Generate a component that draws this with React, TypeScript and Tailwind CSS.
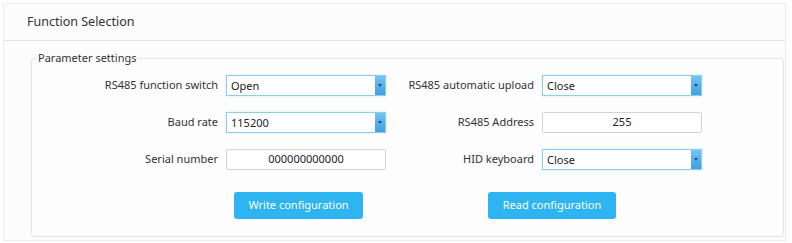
import React from "react";

const font = { fontFamily: '"Noto Sans", "Open Sans", Arial, sans-serif' };

const Select = ({ value }: { value: string }) => (
  <div className="flex h-[21px] w-[160px] items-stretch border border-[#8ecfe6] bg-white shadow-[0_0_2px_#bfe6f5]">
    <span className="flex-1 pl-[4px] text-[11px] leading-[19px] text-[#222]">{value}</span>
    <span className="flex w-[10px] items-center justify-center bg-gradient-to-b from-[#74c3f3] to-[#3f9ee3]">
      <span className="h-0 w-0 border-x-[2px] border-t-[3px] border-x-transparent border-t-[#1f4f86]" />
    </span>
  </div>
);

const Input = ({ value }: { value: string }) => (
  <div className="flex h-[21px] w-[160px] items-center justify-center rounded-[2px] border border-[#d3d3d3] bg-white text-[11px] text-[#222]">
    {value}
  </div>
);

const Label = ({ children }: { children: React.ReactNode }) => (
  <div className="flex h-[21px] items-center justify-end pr-[8px] text-[11px] text-[#333]">{children}</div>
);

export default function App() {
  return (
    <div className="h-[243px] w-[792px] bg-white pl-[3px] pr-[6px] pt-[3px]" style={font}>
      <div className="h-[238px] border border-[#ededed] bg-[#fcfcfc]">
        {/* header */}
        <div className="flex h-[37px] items-center border-b border-[#e4e4e4] pl-[23px] text-[12.5px] text-[#333]">
          Function Selection
        </div>

        <div className="pl-[27px] pr-[1px] pt-[10px]">
          <fieldset className="h-[186px] rounded-[3px] border border-[#e4e4e4] bg-[#fdfdfd]">
            <legend className="ml-[5px] px-[1px] text-[11px] leading-[14px] text-[#333]">Parameter settings</legend>

            <div className="mt-[10px] grid grid-cols-[194px_160px_156px_160px] gap-y-[16px]">
              <Label>RS485 function switch</Label>
              <Select value="Open" />
              <Label>RS485 automatic upload</Label>
              <Select value="Close" />

              <Label>Baud rate</Label>
              <Select value="115200" />
              <Label>RS485 Address</Label>
              <Input value="255" />

              <Label>Serial number</Label>
              <Input value="000000000000" />
              <Label>HID keyboard</Label>
              <Select value="Close" />
            </div>

            <div className="ml-[202px] mt-[22px] flex gap-[125px]">
              <button className="h-[27px] w-[129px] rounded-[3px] bg-[#2eb4f1] text-[11px] text-white">
                Write configuration
              </button>
              <button className="h-[27px] w-[128px] rounded-[3px] bg-[#2eb4f1] text-[11px] text-white">
                Read configuration
              </button>
            </div>
          </fieldset>
        </div>
      </div>
    </div>
  );
}
